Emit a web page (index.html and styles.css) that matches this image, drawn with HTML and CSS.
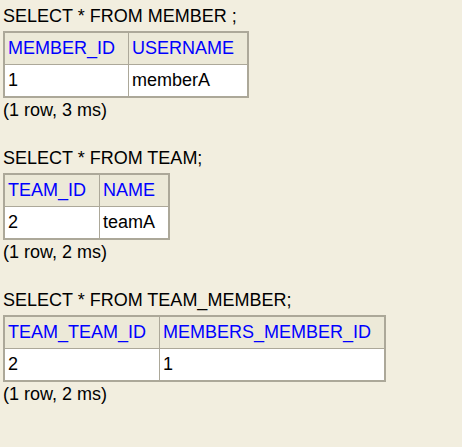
FILE: index.html
```html
<!DOCTYPE html>
<html>
<head>
<meta charset="utf-8">
<link rel="stylesheet" href="styles.css">
</head>
<body>
<div class="block">
  <div class="sql">SELECT * FROM MEMBER ;</div>
  <table class="result">
    <tr><th>MEMBER_ID</th><th>USERNAME</th></tr>
    <tr><td>1</td><td>memberA</td></tr>
  </table>
  <div class="info">(1 row, 3 ms)</div>
</div>
<div class="block">
  <div class="sql">SELECT * FROM TEAM;</div>
  <table class="result">
    <tr><th>TEAM_ID</th><th>NAME</th></tr>
    <tr><td>2</td><td>teamA</td></tr>
  </table>
  <div class="info">(1 row, 2 ms)</div>
</div>
<div class="block">
  <div class="sql">SELECT * FROM TEAM_MEMBER;</div>
  <table class="result">
    <tr><th>TEAM_TEAM_ID</th><th>MEMBERS_MEMBER_ID</th></tr>
    <tr><td>2</td><td>1</td></tr>
  </table>
  <div class="info">(1 row, 2 ms)</div>
</div>
</body>
</html>
```

FILE: styles.css
```css
html, body {
  margin: 0;
  background: #f2eedf;
}
body {
  padding: 6px 3px 0 3px;
  font-family: "Liberation Sans", Arial, sans-serif;
  font-size: 18px;
  color: #000;
}
.block {
  margin-bottom: 27px;
}
.sql {
  line-height: 21px;
  margin-bottom: 4px;
}
.result {
  border-collapse: collapse;
  border: 2px solid #aca899;
}
.result th, .result td {
  border: 1px solid #aca899;
  padding: 5px 13px 5px 3px;
  line-height: 21px;
  text-align: left;
  font-weight: normal;
}
.result th {
  background: #ece9d8;
  color: #0000ff;
}
.result td {
  background: #fff;
}
.info {
  line-height: 21px;
  margin-top: 2px;
}
```
